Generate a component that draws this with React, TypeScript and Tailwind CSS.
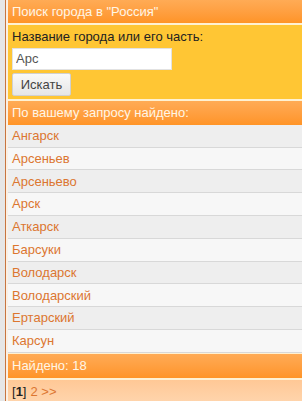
const CITIES = [
  "Ангарск",
  "Арсеньев",
  "Арсеньево",
  "Арск",
  "Аткарск",
  "Барсуки",
  "Володарск",
  "Володарский",
  "Ертарский",
  "Карсун",
];

const font = "font-['Liberation_Sans',Arial,sans-serif]";

export default function App() {
  return (
    <div className={`flex h-[401px] w-[302px] overflow-hidden bg-[#e9e9e9] ${font} text-[13px]`}>
      {/* page edge */}
      <div className="w-[5px] shrink-0 bg-[#e6e6e6]" />
      <div className="flex min-w-0 flex-1 border-l border-[#c8753f] bg-[#fbf0e4] pl-[2px]">
        <div className="flex min-w-0 flex-1 flex-col bg-white">
          {/* Search header */}
          <div className="flex h-[23px] items-center bg-gradient-to-b from-[#ffab55] to-[#ff9426] pl-[4px] text-[#fff6e6]">
            Поиск города в "Россия"
          </div>
          <div className="h-[2px] bg-[#fff1d2]" />

          {/* Search form */}
          <div className="flex h-[75px] flex-col bg-[#ffc634] pl-[4px] pt-[4px]">
            <label className="leading-[16px] text-[#222]">Название города или его часть:</label>
            <input
              defaultValue="Арс"
              className="mt-[3px] h-[22px] w-[160px] border border-[#e2e2e2] bg-white px-[3px] text-[13px] text-[#555] outline-none"
            />
            <button className="mt-[3px] h-[23px] w-[59px] rounded-[2px] border border-[#d0d0d0] bg-gradient-to-b from-[#f9f9f9] to-[#e6e6e6] text-[13px] text-[#444]">
              Искать
            </button>
          </div>
          <div className="h-[2px] bg-[#fff1d2]" />

          {/* Results header */}
          <div className="flex h-[24px] items-center bg-gradient-to-b from-[#ffab55] to-[#ff9426] pl-[4px] text-[#fff6e6]">
            По вашему запросу найдено:
          </div>

          {/* Results list */}
          {CITIES.map((city, i) => (
            <div
              key={city}
              className={`flex h-[23px] items-center border-b border-[#d8d8d8] pl-[4px] ${
                i % 2 === 0 ? "bg-[#eeeeee]" : "bg-[#f7f7f7]"
              }`}
            >
              <a href="#" className="text-[#dc7630]">
                {city}
              </a>
            </div>
          ))}

          {/* Footer */}
          <div className="h-px bg-[#fff1d2]" />
          <div className="flex h-[24px] items-center bg-gradient-to-b from-[#ffab55] to-[#ff9426] pl-[4px] text-[#fff6e6]">
            Найдено: 18
          </div>
          <div className="h-[2px] bg-[#fff1d2]" />
          <div className="flex flex-1 items-start bg-gradient-to-b from-[#ffc896] to-[#ffd4ab] pl-[4px] pt-[2px]">
            <span className="text-[#222]">
              [<b>1</b>]
            </span>
            <a href="#" className="ml-[4px] text-[#dc7630]">
              2 &gt;&gt;
            </a>
          </div>
        </div>
      </div>
    </div>
  );
}
